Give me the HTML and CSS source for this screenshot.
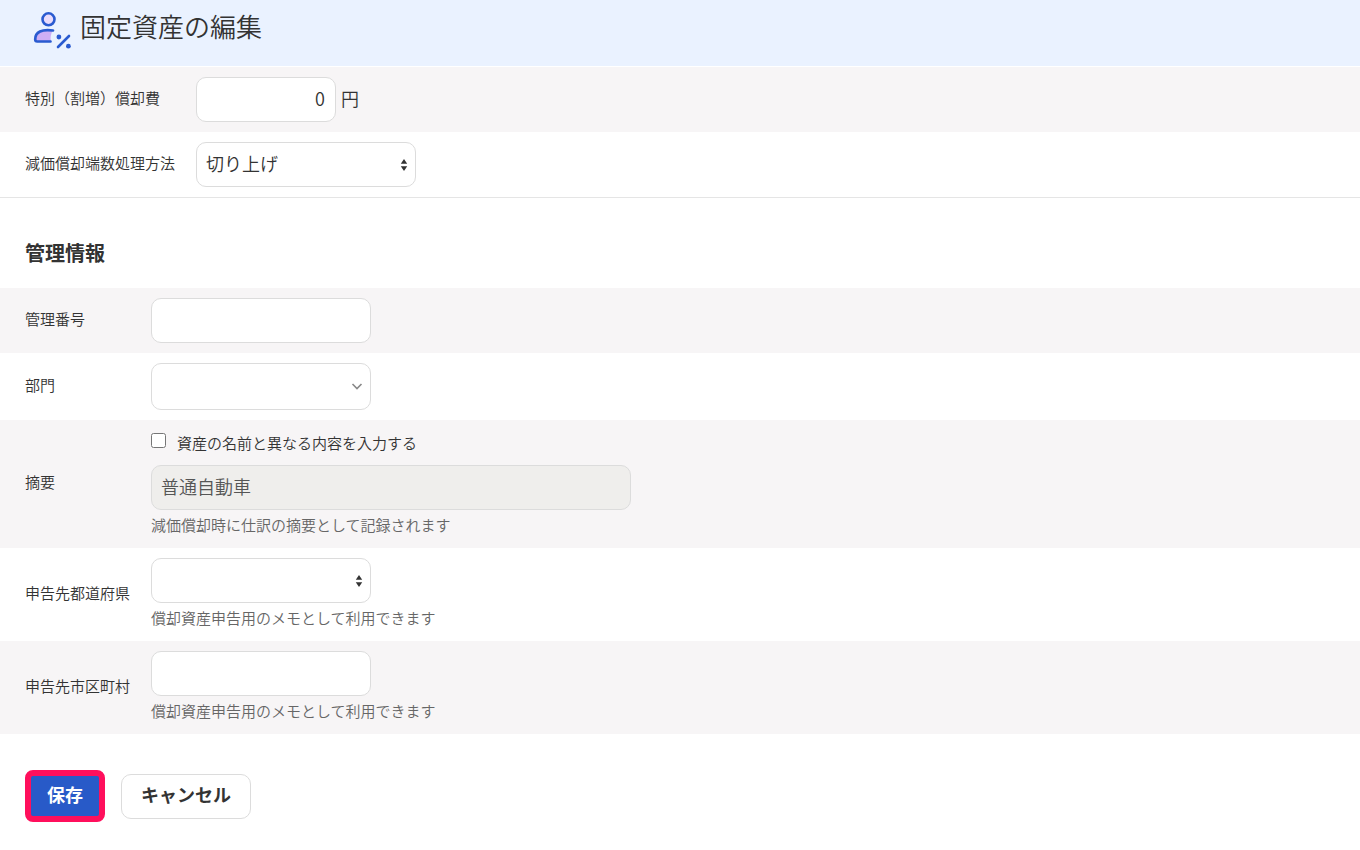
FILE: index.html
```html
<!DOCTYPE html>
<html lang="ja">

<head>
    <meta charset="UTF-8" />
    <meta name="viewport" content="width=device-width, initial-scale=1.0">
    <title>固定資産の編集</title>
    <link rel="stylesheet" href="styles.css">
</head>

<body>
    <header class="page-header">
        <svg class="page-icon" width="40" height="40" viewBox="0 0 40 40" fill="none" aria-hidden="true">
            <circle cx="16.500" cy="9.300" r="6" fill="#eadcfb" stroke="#2a5bd0" stroke-width="2.600" />
            <path d="M20.500 20.500H13C7 20.500 3 24.500 3 29.500c0 1.500.8 2 2 2h14c-1-4 0-7.500 1.500-11z" fill="#cdaef5" />
            <path d="M21 20.500C10 18.800 3.200 22 3.200 29.300c0 1.500.6 2.200 2 2.200H18.500" stroke="#2a5bd0" stroke-width="2.700" stroke-linecap="round" stroke-linejoin="round" />
            <path d="M26 37l11-11" stroke="#2a5bd0" stroke-width="2.600" stroke-linecap="round" />
            <circle cx="26.900" cy="27" r="2.400" fill="#2a5bd0" />
            <circle cx="36.400" cy="36.200" r="2.400" fill="#2a5bd0" />
        </svg>
        <h1>固定資産の編集</h1>
    </header>

    <form>
        <section class="group group-wide">
            <div class="row">
                <label class="name" for="special">特別（割増）償却費</label>
                <div class="field inline">
                    <input class="box amount" id="special" type="text" value="0" />
                    <span class="unit">円</span>
                </div>
            </div>
            <div class="row">
                <label class="name" for="rounding">減価償却端数処理方法</label>
                <div class="field">
                    <div class="select">
                        <select class="box" id="rounding">
                            <option>切り上げ</option>
                            <option>切り捨て</option>
                            <option>四捨五入</option>
                        </select>
                        <svg class="arrow" width="8" height="14" viewBox="0 0 8 14" aria-hidden="true">
                            <path d="M.8 5.700L4 1l3.200 4.700zM.8 8.300L4 13l3.200-4.700z" fill="#333" />
                        </svg>
                    </div>
                </div>
            </div>
        </section>

        <h2>管理情報</h2>

        <section class="group">
            <div class="row">
                <label class="name" for="number">管理番号</label>
                <div class="field">
                    <input class="box" id="number" type="text" />
                </div>
            </div>
            <div class="row">
                <label class="name" for="section">部門</label>
                <div class="field">
                    <div class="select">
                        <select class="box tall" id="section">
                            <option></option>
                        </select>
                        <svg class="arrow" width="12" height="8" viewBox="0 0 12 8" fill="none" aria-hidden="true">
                            <path d="M1.500 1L6 5.500 10.500 1" stroke="#888" stroke-width="1.600" />
                        </svg>
                    </div>
                </div>
            </div>
            <div class="row">
                <label class="name" for="summary">摘要</label>
                <div class="field">
                    <label class="check">
                        <input type="checkbox" />
                        <span>資産の名前と異なる内容を入力する</span>
                    </label>
                    <input class="box long" id="summary" type="text" value="普通自動車" disabled />
                    <p class="help">減価償却時に仕訳の摘要として記録されます</p>
                </div>
            </div>
            <div class="row">
                <label class="name" for="prefecture">申告先都道府県</label>
                <div class="field">
                    <div class="select">
                        <select class="box" id="prefecture">
                            <option></option>
                        </select>
                        <svg class="arrow" width="8" height="14" viewBox="0 0 8 14" aria-hidden="true">
                            <path d="M.8 5.700L4 1l3.200 4.700zM.8 8.300L4 13l3.200-4.700z" fill="#333" />
                        </svg>
                    </div>
                    <p class="help">償却資産申告用のメモとして利用できます</p>
                </div>
            </div>
            <div class="row">
                <label class="name" for="city">申告先市区町村</label>
                <div class="field">
                    <input class="box" id="city" type="text" />
                    <p class="help">償却資産申告用のメモとして利用できます</p>
                </div>
            </div>
        </section>

        <div class="actions">
            <button class="save" type="button">保存</button>
            <button class="cancel" type="button">キャンセル</button>
        </div>
    </form>
</body>

</html>
```
FILE: styles.css
```css
* {
    box-sizing: border-box;
}

body {
    margin: 0;
    background: #fff;
    color: #333;
    font-family: "Noto Sans CJK JP", sans-serif;
    font-size: 15px;
    font-weight: 350;
    line-height: 20px;
}

.page-header {
    display: flex;
    align-items: flex-start;
    gap: 8px;
    padding: 10px 25px 16px 32px;
    margin-bottom: 1px;
    background: #eaf2ff;
}

.page-icon {
    flex: none;
}

h1 {
    margin: 0;
    font-size: 26px;
    font-weight: 350;
    line-height: 32px;
}

h2 {
    margin: 0;
    padding: 40px 25px 20px;
    font-size: 20px;
    font-weight: 700;
    line-height: 30px;
}

.row {
    display: flex;
    align-items: center;
    padding: 10px 25px;
}

.row:nth-child(odd) {
    background: #f7f5f6;
}

.name {
    flex: none;
    width: 126px;
    padding-bottom: 4px;
}

.group-wide .name {
    width: 171px;
}

.group-wide {
    border-bottom: 1px solid #e5e5e5;
}

.inline {
    display: flex;
    align-items: center;
    gap: 5px;
}

.unit {
    padding-bottom: 4px;
    font-size: 18px;
}

.box {
    display: block;
    width: 220px;
    height: 45px;
    margin: 0;
    padding: 0 10px 4px 9px;
    border: 1px solid #dcdcdc;
    border-radius: 10px;
    background: #fff;
    color: #333;
    font-family: inherit;
    font-size: 18px;
    font-weight: inherit;
    appearance: none;
}

.box:disabled {
    background: #efeeec;
    color: #555;
    opacity: 1;
}

.amount {
    width: 140px;
    text-align: right;
}

.tall {
    height: 47px;
}

.long {
    width: 480px;
}

.select {
    position: relative;
    width: 220px;
}

.arrow {
    position: absolute;
    top: 0;
    right: 8px;
    bottom: 0;
    margin: auto 0;
    pointer-events: none;
}

.check {
    display: flex;
    width: max-content;
    gap: 11px;
    padding: 3px 0 12px;
}

.check input {
    width: 15px;
    height: 15px;
    margin: 0;
}

.help {
    margin: 5px 0 3px;
    color: #666;
}

.actions {
    display: flex;
    align-items: center;
    gap: 16px;
    padding: 36px 25px 28px;
}

button {
    font-family: inherit;
    font-size: 18px;
    font-weight: 700;
    cursor: pointer;
}

.save {
    height: 52px;
    padding: 0 16px 4px;
    border: 6px solid #ff0f5c;
    border-radius: 8px;
    background: #285ac8;
    color: #fff;
}

.cancel {
    height: 45px;
    padding: 0 19px 4px;
    border: 1px solid #dcdcdc;
    border-radius: 10px;
    background: #fff;
    color: #333;
}
```
